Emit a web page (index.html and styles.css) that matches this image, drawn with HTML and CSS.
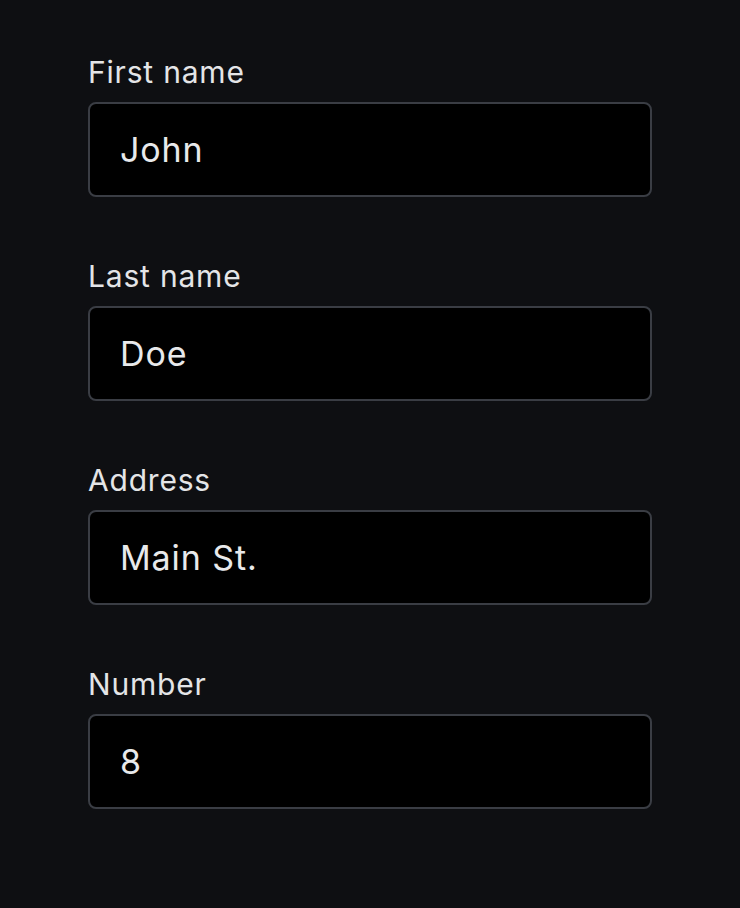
FILE: index.html
```html
<!DOCTYPE html>
<html lang="en">
<head>
    <meta charset="UTF-8">
    <meta name="viewport" content="width=device-width, initial-scale=1.0">
    <title>Address form</title>
    <link rel="stylesheet" href="styles.css">
</head>
<body>
    <form class="address-form">
        <div class="form-group">
            <label for="firstName">First name</label>
            <input type="text" id="firstName" name="firstName" value="John">
        </div>

        <div class="form-group">
            <label for="lastName">Last name</label>
            <input type="text" id="lastName" name="lastName" value="Doe">
        </div>

        <div class="form-group">
            <label for="address">Address</label>
            <input type="text" id="address" name="address" value="Main St.">
        </div>

        <div class="form-group">
            <label for="number">Number</label>
            <input type="text" id="number" name="number" value="8">
        </div>
    </form>
</body>
</html>
```

FILE: styles.css
```css
* {
    margin: 0;
    padding: 0;
    box-sizing: border-box;
    font-family: Inter, 'Noto Sans', sans-serif;
}

body {
    background: #0e0f12;
    min-height: 100vh;
    padding: 55px 88px;
}

.address-form {
    display: flex;
    flex-direction: column;
    gap: 62px;
    width: 564px;
}

.form-group label {
    display: block;
    color: #e4e5e7;
    font-size: 30px;
    line-height: 34px;
    letter-spacing: 0.8px;
    margin-bottom: 13px;
}

.form-group input {
    width: 100%;
    height: 95px;
    padding: 0 30px;
    background: #000;
    border: 2px solid #3a3d44;
    border-radius: 8px;
    color: #e8e9eb;
    font-size: 34px;
    letter-spacing: 0.9px;
    outline: none;
}
```
